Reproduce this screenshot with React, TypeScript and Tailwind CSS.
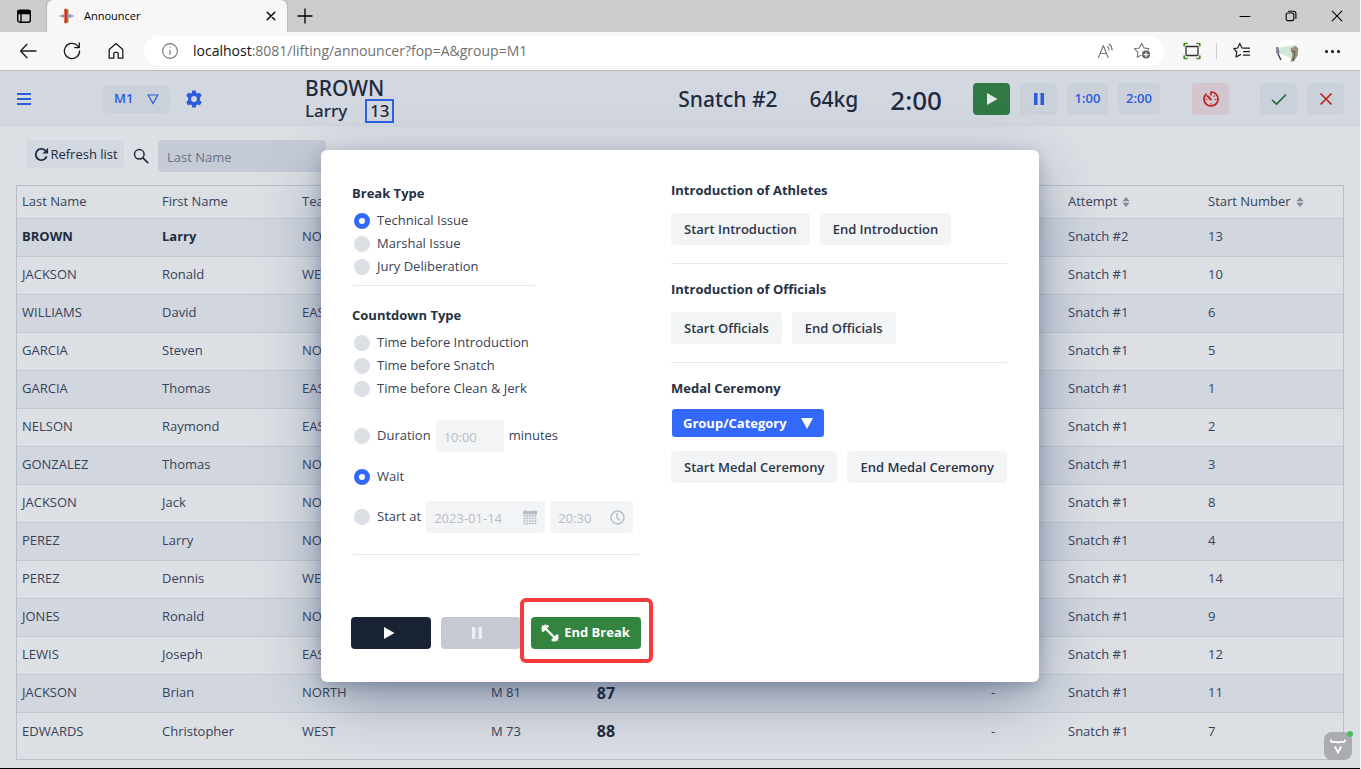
import React from "react";

type SvgProps = { className?: string };

const blue = "text-[#2c5bdc]";

function Stroke({ className, children, w = 1.2, size = 18 }: SvgProps & { children: React.ReactNode; w?: number; size?: number }) {
  return (
    <svg
      className={className}
      viewBox={`0 0 ${size} ${size}`}
      width={size}
      height={size}
      fill="none"
      stroke="currentColor"
      strokeWidth={w}
      strokeLinecap="round"
      strokeLinejoin="round"
      aria-hidden="true"
    >
      {children}
    </svg>
  );
}

function BrowserTabs() {
  return (
    <div className="flex h-8 items-stretch bg-[#cdcdcd] text-black">
      <button aria-label="Tab actions" className="flex w-[47px] items-center justify-center">
        <Stroke w={1.4} size={16}>
          <rect x="1.7" y="2.2" width="12.6" height="12" rx="2" />
          <path d="M2 3.2h12v2.4H2z" fill="currentColor" />
          <path d="M5 6v8" />
        </Stroke>
      </button>
      <div className="flex w-60 items-center rounded-t-md bg-[#f7f7f7] pr-2 pl-3 shadow-[0_0_2px_rgba(0,0,0,0.35)]">
        <svg width="16" height="16" viewBox="0 0 16 16" aria-hidden="true">
          <path d="M0 8h5" stroke="#999" strokeWidth="1.2" />
          <path d="M3.8 6.5v3" stroke="#666" strokeWidth="1.3" />
          <path d="M5.4 0.8h2.4v14.4H5.4z" fill="#f0130c" />
          <path d="M7.8 1.5H9.500v13H7.800z" fill="#5a9a32" />
          <path d="M9.5 8H14.5M11.3 6v4" stroke="#8b88df" strokeWidth="1.4" />
        </svg>
        <span className="ml-[9px] text-[11px]">Announcer</span>
        <button aria-label="Close tab" className="ml-auto flex size-4 items-center justify-center">
          <Stroke size={10} w={1.4}>
            <path d="M1.2 1.2l7.6 7.6M8.8 1.2L1.2 8.8" />
          </Stroke>
        </button>
      </div>
      <button aria-label="New tab" className="flex w-9 items-center justify-center">
        <Stroke size={16} w={1.3}>
          <path d="M8 1v14M1 8h14" />
        </Stroke>
      </button>
      <div className="ml-auto flex">
        <button aria-label="Minimize" className="flex w-[46px] items-center justify-center">
          <Stroke size={12} w={1}>
            <path d="M1 6.5h10" />
          </Stroke>
        </button>
        <button aria-label="Restore" className="flex w-[46px] items-center justify-center">
          <Stroke size={12} w={1.1}>
            <rect x="1.2" y="3" width="7.6" height="7.6" rx="1.5" />
            <path d="M3.5 1.2h5a2.4 2.4 0 0 1 2.4 2.4v4.8" />
          </Stroke>
        </button>
        <button aria-label="Close" className="flex w-[46px] items-center justify-center">
          <Stroke size={12} w={1.1}>
            <path d="M1.2 1.2l9.6 9.6M10.8 1.2l-9.6 9.6" />
          </Stroke>
        </button>
      </div>
    </div>
  );
}

function BrowserToolbar() {
  return (
    <div className="flex h-[39px] items-center border-b border-[#b9bab9] bg-[#f7f7f7] pr-[18px] text-[#1b1b1b]">
      <div className="flex w-36 items-center gap-[26px] pl-[19px]">
        <button aria-label="Back">
          <Stroke w={1.3}>
            <path d="M17 9H1.5M8 2.2L1.5 9 8 15.8" />
          </Stroke>
        </button>
        <button aria-label="Reload">
          <Stroke w={1.3}>
            <path d="M16.6 9A7.6 7.6 0 1 1 14.2 3.4L16 5.2M16.3 1v4.6h-4.6" />
          </Stroke>
        </button>
        <button aria-label="Home">
          <Stroke w={1.3}>
            <path d="M2.2 7.6L9 1.6l6.8 6v8.6h-4.6v-4.4a1.4 1.4 0 0 0-1.4-1.4H8.2a1.4 1.4 0 0 0-1.4 1.4v4.4H2.2z" />
          </Stroke>
        </button>
      </div>
      <div className="flex h-[30px] flex-1 items-center rounded-full bg-white pr-[13px] pl-[17px]">
        <Stroke className="text-[#767676]" w={1.1}>
          <circle cx="9" cy="9" r="7.4" />
          <path d="M9 8v4.5M9 5.4v.3" />
        </Stroke>
        <div className="ml-[14px] flex-1 text-[14px] leading-5 text-[#717171]">
          <a href="#page" className="whitespace-nowrap">
            <span className="text-[#111]">localhost</span>:8081/lifting/announcer?fop=A&amp;group=M1
          </a>
        </div>
        <button aria-label="Read aloud" className="text-[#767676]">
          <Stroke w={1.1}>
            <path d="M1.5 15.5L6.3 3.5l4.8 12M3 11.5h6.6M10.5 4.5c1 .9 1.5 2 1.5 3.4M12.2 2.2c1.9 1.5 2.9 3.5 2.9 5.9" />
          </Stroke>
        </button>
        <button aria-label="Add to favorites" className="ml-[18px] text-[#767676]">
          <Stroke w={1.1}>
            <path d="M15 8l1-1.300-5-.8L8.700 1.300 6.400 6l-5 .8L5 10.300l-.8 5L8 13.300" />
            <circle cx="13" cy="12.6" r="4" fill="#5f5f5f" stroke="none" />
            <path d="M13 10.5v4.2M10.9 12.6h4.2" stroke="#fff" />
          </Stroke>
        </button>
      </div>
      <div className="flex items-center">
        <button aria-label="Capture" className="ml-[19px]">
          <Stroke w={1.3}>
            <rect x="3" y="4.5" width="12" height="9" rx="0.5" stroke="#333" />
            <path d="M1.2 4.5V1.5h3.3M13.5 1.5h3.3v3M16.8 13.5v3h-3.3M4.500 16.500H1.200v-3" stroke="#3f8a1c" strokeWidth="1.6" strokeLinecap="butt" />
          </Stroke>
        </button>
        <span className="ml-[15px] h-4 w-px bg-[#cfcfcf]" />
        <button aria-label="Favorites" className="ml-4">
          <Stroke w={1.2}>
            <path d="M9.500 6H9L6.800 1.400 4.700 6l-3.900.6 3 3.400-.8 5 4.500-2.400M10.500 6.200h6M10.500 9.700h6M10.500 13.200h6" />
          </Stroke>
        </button>
        <button aria-label="Profile" className="ml-6">
          <svg width="24" height="24" viewBox="0 0 24 24" aria-hidden="true">
            <circle cx="12" cy="12" r="11.6" fill="#fff" />
            <path d="M3 9l19-3.500v9L17 20 4 14z" fill="#cfe8d8" />
            <path d="M1 8h2.500l1 5-.8 3L1 14z" fill="#84849a" />
            <path d="M3 15l3 6" stroke="#444" strokeWidth="1.5" />
            <path d="M15 10l5-3 3.300 2-.5 7-3.500 6-4 1 2-6-.5-5z" fill="#9b9078" />
            <path d="M16 12l4 1-2 9" stroke="#5f5444" fill="none" />
          </svg>
        </button>
        <button aria-label="Settings and more" className="ml-6 flex gap-[3px] px-0.5">
          <span className="size-[3px] rounded-full bg-black" />
          <span className="size-[3px] rounded-full bg-black" />
          <span className="size-[3px] rounded-full bg-black" />
        </button>
      </div>
    </div>
  );
}

function PlayIcon() {
  return (
    <svg width="12" height="12" viewBox="0 0 12 12" fill="currentColor" aria-hidden="true">
      <path d="M1 0l10.500 6L1 12z" />
    </svg>
  );
}

function PauseIcon() {
  return (
    <svg width="12" height="12" viewBox="0 0 12 12" fill="currentColor" aria-hidden="true">
      <path d="M1 0h3.500v12H1zM7.500 0H11v12H7.500z" />
    </svg>
  );
}

function GearIcon() {
  return (
    <svg width="18" height="18" viewBox="0 0 18 18" fill="currentColor" aria-hidden="true">
      <path
        fillRule="evenodd"
        d="M7.200 0.500h3.600l.5 2.400 1.300.7 2.300-.9 1.900 3.100-1.900 1.700v2.900l1.900 1.700-1.900 3.100-2.300-.8-1.300.7-.5 2.400H7.200l-.5-2.400-1.300-.7-2.300.8-1.900-3.100 1.900-1.700V7.500L1.200 5.800l1.900-3.100 2.300.9 1.300-.7zM9 6.100a2.900 2.900 0 1 0 0 5.800 2.900 2.900 0 0 0 0-5.800z"
      />
    </svg>
  );
}

function AnnouncerBar() {
  const btn = "flex h-8 items-center justify-center rounded bg-[#cbd1da] text-[13px] font-semibold";
  return (
    <header className="flex h-14 items-center bg-[#d3d8e0] px-4 text-[#1f2b40]">
      <button aria-label="Menu" className="flex size-4 flex-col items-center justify-center gap-[3px]">
        <span className="h-[2px] w-[14px] bg-[#2c5bdc]" />
        <span className="h-[2px] w-[14px] bg-[#2c5bdc]" />
        <span className="h-[2px] w-[14px] bg-[#2c5bdc]" />
      </button>
      <div className={`relative ml-[71px] ${blue}`}>
        <select aria-label="Group" className="h-7 w-[67px] appearance-none rounded bg-[#cbd1da] pl-[11px] text-[13px] font-semibold">
          <option>M1</option>
        </select>
        <svg className="pointer-events-none absolute top-[9px] right-[11px]" width="12" height="11" viewBox="0 0 12 11" fill="none" stroke="currentColor" strokeWidth="1.2" aria-hidden="true">
          <path d="M1.200 1h9.600L6 9.500z" />
        </svg>
      </div>
      <button aria-label="Settings" className={`ml-[15px] ${blue}`}>
        <GearIcon />
      </button>
      <div className="ml-[102px] self-start pt-[5px] font-['Noto_Sans',sans-serif] font-medium">
        <h2 className="h-6 text-[21px] leading-6">BROWN</h2>
        <div className="flex h-[22px] items-center gap-[18px]">
          <span className="text-[17px] leading-[22px]">Larry</span>
          <span className="flex h-6 w-[29px] items-center justify-center border-2 border-[#2e62e0] text-[17px] leading-5">13</span>
        </div>
      </div>
      <div className="ml-auto flex items-center">
        <div className="flex items-center gap-8 pt-0.5 font-['Noto_Sans',sans-serif] font-medium">
          <span className="text-[21px]">Snatch #2</span>
          <span className="text-[21px]">64kg</span>
          <span className="text-[26px]">2:00</span>
        </div>
        <button aria-label="Start clock" className="ml-[31px] flex h-8 w-[37px] items-center justify-center rounded bg-[#327a45] text-[#e6e9ec]">
          <PlayIcon />
        </button>
        <div className="ml-[10px] flex gap-[10px]">
          <button aria-label="Stop clock" className={`w-[37px] ${btn} ${blue}`}>
            <PauseIcon />
          </button>
          <button className={`w-[41px] ${btn} ${blue}`}>1:00</button>
          <button className={`w-[42px] ${btn} ${blue}`}>2:00</button>
        </div>
        <button aria-label="Break timer" className="ml-8 flex h-8 w-[37px] items-center justify-center rounded bg-[#d4c6ce] text-[#bb201b]">
          <Stroke size={16} w={1.6}>
            <path d="M3.600 2.600A7 7 0 1 0 8 1v3.500" strokeLinecap="butt" />
            <path d="M4.500 5l3.300 3.500" strokeWidth="1.9" />
            <path d="M3 8.500h.8M12.200 8.500h.8M8 12.500v.8M11.600 4.900l-.5.500" strokeWidth="1.1" />
          </Stroke>
        </button>
        <div className="ml-[31px] flex gap-[10px]">
          <button aria-label="Good lift" className={`w-[37px] text-[#1f7040] ${btn}`}>
            <Stroke size={16} w={1.7}>
              <path d="M1 9l4.500 4.200L15 3.500" strokeLinecap="butt" />
            </Stroke>
          </button>
          <button aria-label="No lift" className={`w-[37px] text-[#bb201b] ${btn}`}>
            <Stroke size={14} w={1.7}>
              <path d="M1.500 1.500l11 11M12.500 1.500l-11 11" strokeLinecap="butt" />
            </Stroke>
          </button>
        </div>
      </div>
    </header>
  );
}

function ListTools() {
  return (
    <div className="flex h-[58px] items-start pt-[13px] pl-[26px] text-[#1f2b40]">
      <button className="flex h-7 w-[98px] items-center justify-center gap-px rounded bg-[#d2d7e0] pt-px pl-0.5 text-[13px] whitespace-nowrap">
        <svg width="15" height="15" viewBox="0 0 16 16" className="shrink-0" aria-hidden="true">
          <path d="M13.500 10A6 6 0 1 1 12 3.700" fill="none" stroke="currentColor" strokeWidth="2" />
          <path d="M15 0.800v6H9z" fill="currentColor" />
        </svg>
        Refresh list
      </button>
      <label htmlFor="search" aria-label="Search by last name" className="mt-2 ml-[9px]">
        <Stroke size={16} w={1.5}>
          <circle cx="6.3" cy="6.3" r="4.8" />
          <path d="M9.900 9.900l4.800 4.800" strokeWidth="1.7" />
        </Stroke>
      </label>
      <input id="search" placeholder="Last Name" className="ml-[9px] h-8 w-[168px] rounded bg-[#c5cbd6] px-[9px] pt-px text-[13px] placeholder:text-[#667289]" />
    </div>
  );
}

type Athlete = { last: string; first: string; team: string; attempt: string; start: number; category?: string; weight?: string };

const athletes: Athlete[] = [
  { last: "BROWN", first: "Larry", team: "NORTH", attempt: "Snatch #2", start: 13 },
  { last: "JACKSON", first: "Ronald", team: "WEST", attempt: "Snatch #1", start: 10 },
  { last: "WILLIAMS", first: "David", team: "EAST", attempt: "Snatch #1", start: 6 },
  { last: "GARCIA", first: "Steven", team: "NORTH", attempt: "Snatch #1", start: 5 },
  { last: "GARCIA", first: "Thomas", team: "EAST", attempt: "Snatch #1", start: 1 },
  { last: "NELSON", first: "Raymond", team: "EAST", attempt: "Snatch #1", start: 2 },
  { last: "GONZALEZ", first: "Thomas", team: "NORTH", attempt: "Snatch #1", start: 3 },
  { last: "JACKSON", first: "Jack", team: "NORTH", attempt: "Snatch #1", start: 8 },
  { last: "PEREZ", first: "Larry", team: "NORTH", attempt: "Snatch #1", start: 4 },
  { last: "PEREZ", first: "Dennis", team: "WEST", attempt: "Snatch #1", start: 14 },
  { last: "JONES", first: "Ronald", team: "NORTH", attempt: "Snatch #1", start: 9 },
  { last: "LEWIS", first: "Joseph", team: "EAST", attempt: "Snatch #1", start: 12 },
  { last: "JACKSON", first: "Brian", team: "NORTH", attempt: "Snatch #1", start: 11, category: "M 81", weight: "87" },
  { last: "EDWARDS", first: "Christopher", team: "WEST", attempt: "Snatch #1", start: 7, category: "M 73", weight: "88" },
];

function SortIcon() {
  return (
    <svg width="8" height="10" viewBox="0 0 8 10" fill="#7f899a" aria-hidden="true">
      <path d="M4 0l3.600 4.200H.4zM4 10L.4 5.800h7.200z" />
    </svg>
  );
}

function AthleteTable() {
  return (
    <div className="mx-4 border border-[#b8c0cc] pb-[9px]">
      <table className="w-full table-fixed border-collapse text-[13px] text-[#36435a]">
        <colgroup>
          <col className="w-[140px]" />
          <col className="w-[140px]" />
          <col className="w-[140px]" />
          <col className="w-[138px]" />
          <col className="w-[62px]" />
          <col />
          <col className="w-[140px]" />
          <col className="w-[140px]" />
          <col className="w-[140px]" />
        </colgroup>
        <thead>
          <tr className="h-8 border-b border-[#c3c9d4] text-left">
            <th className="px-[5px] font-medium">Last Name</th>
            <th className="px-[5px] font-medium">First Name</th>
            <th className="px-[5px] font-medium">Team</th>
            <td colSpan={4} />
            <th className="px-[5px] font-medium">
              <span className="flex items-center gap-[5px]">Attempt <SortIcon /></span>
            </th>
            <th className="px-[5px] font-medium">
              <span className="flex items-center gap-[5px] whitespace-nowrap">Start Number <SortIcon /></span>
            </th>
          </tr>
        </thead>
        <tbody>
          {athletes.map((a, i) => {
            const name = i === 0 ? "px-[5px] font-bold text-[#1f2b40]" : "px-[5px]";
            return (
              <tr key={a.start} className="h-[38px] border-b border-[#c3c9d4] last:border-b-0 odd:bg-[#d2d7df]">
                <td className={name}>{a.last}</td>
                <td className={name}>{a.first}</td>
                <td className="px-[5px]">{a.team}</td>
                <td className="text-center">{a.category}</td>
                <td className="text-center text-[16px] leading-5 font-bold text-[#1f2b40]">{a.weight}</td>
                <td />
                <td className="text-center">{a.weight ? "-" : null}</td>
                <td className="px-[5px]">{a.attempt}</td>
                <td className="px-[5px]">{a.start}</td>
              </tr>
            );
          })}
        </tbody>
      </table>
    </div>
  );
}

function Radio({ name, label, checked }: { name: string; label: string; checked?: boolean }) {
  return (
    <label className="flex h-[23px] items-center gap-[7px] pl-[3px] whitespace-nowrap">
      <input
        type="radio"
        name={name}
        defaultChecked={checked}
        className="size-4 appearance-none rounded-full bg-[#dcdfe6] checked:border-[5px] checked:border-[#3369fa] checked:bg-white"
      />
      {label}
    </label>
  );
}

function SoftButton({ children }: { children: React.ReactNode }) {
  return <button className="h-8 rounded bg-[#f3f4f6] px-[13px] pt-px font-semibold whitespace-nowrap text-[#2b3547]">{children}</button>;
}

function BarbellIcon() {
  return (
    <svg width="20" height="20" viewBox="0 0 20 20" fill="none" stroke="currentColor" aria-hidden="true">
      <path d="M2 2.500l16 15" strokeWidth="1.2" />
      <path d="M5 5l10 10" strokeWidth="2.2" />
      <path d="M2.200 8.300l6-6M12 17.800l6-6" strokeWidth="2.6" />
      <path d="M1.600 5.800l4-4M14.300 18.300l4-4" strokeWidth="1.8" />
    </svg>
  );
}

function BreakDialog() {
  const field = "h-8 rounded bg-[#f3f4f6] px-2 pt-px text-[13px] text-[#b6bcc8]";
  return (
    <div
      role="dialog"
      aria-label="Break management"
      className="flex w-[718px] rounded-md bg-white pt-[31px] pb-[33px] pl-[30px] text-[13px] text-[#384357] shadow-[0_4px_16px_-2px_rgba(25,45,85,0.3),0_18px_60px_-6px_rgba(25,45,85,0.45)]"
    >
      <div className="w-80 shrink-0">
        <h3 className="h-6 pl-px leading-6 font-bold text-[#263144]">Break Type</h3>
        <div className="mt-1">
          <Radio name="break" label="Technical Issue" checked />
          <Radio name="break" label="Marshal Issue" />
          <Radio name="break" label="Jury Deliberation" />
        </div>
        <hr className="mt-[7px] ml-[2px] w-[182px] border-[#e6e8ec]" />
        <h3 className="mt-[17px] h-6 pl-px leading-6 font-bold text-[#263144]">Countdown Type</h3>
        <div className="mt-1">
          <Radio name="countdown" label="Time before Introduction" />
          <Radio name="countdown" label="Time before Snatch" />
          <Radio name="countdown" label="Time before Clean &amp; Jerk" />
        </div>
        <div className="mt-5 flex h-8 items-center gap-[5px]">
          <Radio name="countdown" label="Duration" />
          <input aria-label="Duration" disabled defaultValue="10:00" className={`w-[68px] ${field}`} />
          <span>minutes</span>
        </div>
        <div className="mt-[13px]">
          <Radio name="countdown" label="Wait" checked />
        </div>
        <div className="mt-[13px] flex h-8 items-center gap-[5px]">
          <Radio name="countdown" label="Start at" />
          <div className="relative">
            <input aria-label="Start date" disabled defaultValue="2023-01-14" className={`w-[119px] ${field}`} />
            <svg className="absolute top-[9px] right-2" width="14" height="15" viewBox="0 0 14 15" fill="#b6bcc8" aria-hidden="true">
              <path d="M0 1h2V0h1.500v1h7V0H12v1h2v3.500H0z" />
              <path d="M.5 6h13M.5 8.500h13M.5 11h13M.5 13.500h13" stroke="#b6bcc8" strokeWidth="1.7" strokeDasharray="2 0.7" />
            </svg>
          </div>
          <div className="relative">
            <input aria-label="Start time" disabled defaultValue="20:30" className={`w-[83px] ${field}`} />
            <Stroke size={15} w={1.4} className="absolute top-[9px] right-2 text-[#b6bcc8]">
              <circle cx="7.5" cy="7.5" r="6.5" />
              <path d="M7 3.500v4.200l2.500 2.300" />
            </Stroke>
          </div>
        </div>
        <hr className="mt-[21px] ml-[2px] w-[286px] border-[#e6e8ec]" />
        <div className="mt-[62px] flex gap-[10px]">
          <button aria-label="Start break" className="flex h-8 w-20 items-center justify-center rounded bg-[#1a2333] pr-1 text-white">
            <PlayIcon />
          </button>
          <button aria-label="Pause break" disabled className="flex h-8 w-20 items-center justify-center rounded bg-[#c5c9d1] pr-2 text-[#eceef1]">
            <PauseIcon />
          </button>
          <div className="relative">
            <button className="flex h-8 w-[110px] items-center justify-center gap-1 rounded bg-[#32843f] pr-0.5 font-bold whitespace-nowrap text-white">
              <BarbellIcon />
              End Break
            </button>
            <span className="pointer-events-none absolute -top-[19px] -right-3 -bottom-[14px] -left-[11px] rounded-md border-4 border-[#f53b3b]" />
          </div>
        </div>
      </div>
      <div className="-mt-[3px]">
        <h3 className="h-6 leading-6 font-bold text-[#263144]">Introduction of Athletes</h3>
        <div className="mt-[11px] flex gap-[10px]">
          <SoftButton>Start Introduction</SoftButton>
          <SoftButton>End Introduction</SoftButton>
        </div>
        <hr className="mt-[18px] w-[336px] border-[#e6e8ec]" />
        <h3 className="mt-[13px] h-6 leading-6 font-bold text-[#263144]">Introduction of Officials</h3>
        <div className="mt-[11px] flex gap-[10px]">
          <SoftButton>Start Officials</SoftButton>
          <SoftButton>End Officials</SoftButton>
        </div>
        <hr className="mt-[18px] w-[336px] border-[#e6e8ec]" />
        <h3 className="mt-[13px] h-6 leading-6 font-bold text-[#263144]">Medal Ceremony</h3>
        <div className="relative mt-[9px] ml-px w-[152px] text-white">
          <select aria-label="Medal group or category" className="h-7 w-full appearance-none rounded-[3px] bg-[#3369fa] pt-px pl-[11px] font-bold">
            <option>Group/Category</option>
          </select>
          <svg className="pointer-events-none absolute top-[9px] right-[11px]" width="12" height="11" viewBox="0 0 12 11" fill="currentColor" aria-hidden="true">
            <path d="M0 0h12L6 11z" />
          </svg>
        </div>
        <div className="mt-[14px] flex gap-[10px]">
          <SoftButton>Start Medal Ceremony</SoftButton>
          <SoftButton>End Medal Ceremony</SoftButton>
        </div>
      </div>
    </div>
  );
}

export default function App() {
  return (
    <div className="flex min-h-screen flex-col bg-[#f7f7f7] pr-px font-['Open_Sans','Noto_Sans',sans-serif]">
      <BrowserTabs />
      <BrowserToolbar />
      <main id="page" className="relative flex-1 border-b border-black bg-[#dcdfe4]">
        <AnnouncerBar />
        <ListTools />
        <AthleteTable />
        <div className="absolute inset-0 flex items-center justify-center pb-[7px]">
          <BreakDialog />
        </div>
        <button aria-label="Developer tools" className="absolute right-2 bottom-2 flex size-7 items-center justify-center rounded-lg bg-[#aaacb0] text-white">
          <svg width="16" height="15" viewBox="0 0 16 15" fill="none" stroke="currentColor" strokeWidth="1.8" aria-hidden="true">
            <path d="M1 0.500v1.200q0 1.200 1.200 1.200h4q1.800 0 1.800 1.500 0-1.500 1.800-1.500h4q1.200 0 1.200-1.200V.5M4.800 7.500L8 13.500l3.200-6" />
          </svg>
          <span className="absolute -top-px -right-px size-[6px] rounded-full bg-[#41c05b]" />
        </button>
      </main>
    </div>
  );
}
